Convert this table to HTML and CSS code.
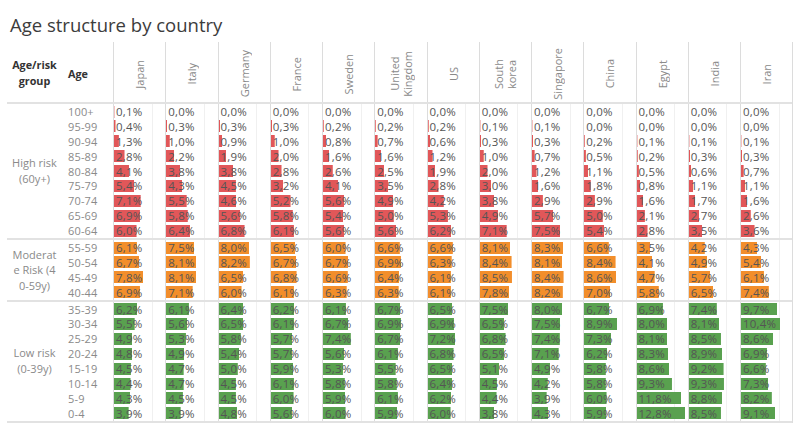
FILE: index.html
```
<!DOCTYPE html>
<html lang="en">
<head>
<meta charset="utf-8">
<title>Age structure by country</title>
<link rel="stylesheet" href="styles.css">
</head>
<body>
<div class="title">Age structure by country</div>
<div class="table">
  <div class="head">
    <div class="h-group">Age/risk<br>group</div>
    <div class="h-age">Age</div>
    <div class="h-country"><span>Japan</span></div>
    <div class="h-country"><span>Italy</span></div>
    <div class="h-country"><span>Germany</span></div>
    <div class="h-country"><span>France</span></div>
    <div class="h-country"><span>Sweden</span></div>
    <div class="h-country"><span>United<br>Kingdom</span></div>
    <div class="h-country"><span>US</span></div>
    <div class="h-country"><span>South<br>korea</span></div>
    <div class="h-country"><span>Singapore</span></div>
    <div class="h-country"><span>China</span></div>
    <div class="h-country"><span>Egypt</span></div>
    <div class="h-country"><span>India</span></div>
    <div class="h-country"><span>Iran</span></div>
  </div>

  <div class="section high">
    <div class="group span9">High risk<br>(60y+)</div>
    <div class="age">100+</div><div class="c" style="--v:0.1">0,1%</div><div class="c" style="--v:0">0,0%</div><div class="c" style="--v:0">0,0%</div><div class="c" style="--v:0">0,0%</div><div class="c" style="--v:0">0,0%</div><div class="c" style="--v:0">0,0%</div><div class="c" style="--v:0">0,0%</div><div class="c" style="--v:0">0,0%</div><div class="c" style="--v:0">0,0%</div><div class="c" style="--v:0">0,0%</div><div class="c" style="--v:0">0,0%</div><div class="c" style="--v:0">0,0%</div><div class="c" style="--v:0">0,0%</div>
    <div class="age">95-99</div><div class="c" style="--v:0.4">0,4%</div><div class="c" style="--v:0.3">0,3%</div><div class="c" style="--v:0.3">0,3%</div><div class="c" style="--v:0.3">0,3%</div><div class="c" style="--v:0.2">0,2%</div><div class="c" style="--v:0.2">0,2%</div><div class="c" style="--v:0.2">0,2%</div><div class="c" style="--v:0.1">0,1%</div><div class="c" style="--v:0.1">0,1%</div><div class="c" style="--v:0">0,0%</div><div class="c" style="--v:0">0,0%</div><div class="c" style="--v:0">0,0%</div><div class="c" style="--v:0">0,0%</div>
    <div class="age">90-94</div><div class="c" style="--v:1.3">1,3%</div><div class="c" style="--v:1.0">1,0%</div><div class="c" style="--v:0.9">0,9%</div><div class="c" style="--v:1.0">1,0%</div><div class="c" style="--v:0.8">0,8%</div><div class="c" style="--v:0.7">0,7%</div><div class="c" style="--v:0.6">0,6%</div><div class="c" style="--v:0.3">0,3%</div><div class="c" style="--v:0.3">0,3%</div><div class="c" style="--v:0.2">0,2%</div><div class="c" style="--v:0.1">0,1%</div><div class="c" style="--v:0.1">0,1%</div><div class="c" style="--v:0.1">0,1%</div>
    <div class="age">85-89</div><div class="c" style="--v:2.8">2,8%</div><div class="c" style="--v:2.2">2,2%</div><div class="c" style="--v:1.9">1,9%</div><div class="c" style="--v:2.0">2,0%</div><div class="c" style="--v:1.6">1,6%</div><div class="c" style="--v:1.6">1,6%</div><div class="c" style="--v:1.2">1,2%</div><div class="c" style="--v:1.0">1,0%</div><div class="c" style="--v:0.7">0,7%</div><div class="c" style="--v:0.5">0,5%</div><div class="c" style="--v:0.2">0,2%</div><div class="c" style="--v:0.3">0,3%</div><div class="c" style="--v:0.3">0,3%</div>
    <div class="age">80-84</div><div class="c" style="--v:4.1">4,1%</div><div class="c" style="--v:3.8">3,8%</div><div class="c" style="--v:3.8">3,8%</div><div class="c" style="--v:2.8">2,8%</div><div class="c" style="--v:2.6">2,6%</div><div class="c" style="--v:2.5">2,5%</div><div class="c" style="--v:1.9">1,9%</div><div class="c" style="--v:2.0">2,0%</div><div class="c" style="--v:1.2">1,2%</div><div class="c" style="--v:1.1">1,1%</div><div class="c" style="--v:0.5">0,5%</div><div class="c" style="--v:0.6">0,6%</div><div class="c" style="--v:0.7">0,7%</div>
    <div class="age">75-79</div><div class="c" style="--v:5.4">5,4%</div><div class="c" style="--v:4.3">4,3%</div><div class="c" style="--v:4.5">4,5%</div><div class="c" style="--v:3.2">3,2%</div><div class="c" style="--v:4.1">4,1%</div><div class="c" style="--v:3.5">3,5%</div><div class="c" style="--v:2.8">2,8%</div><div class="c" style="--v:3.0">3,0%</div><div class="c" style="--v:1.6">1,6%</div><div class="c" style="--v:1.8">1,8%</div><div class="c" style="--v:0.8">0,8%</div><div class="c" style="--v:1.1">1,1%</div><div class="c" style="--v:1.1">1,1%</div>
    <div class="age">70-74</div><div class="c" style="--v:7.1">7,1%</div><div class="c" style="--v:5.5">5,5%</div><div class="c" style="--v:4.6">4,6%</div><div class="c" style="--v:5.2">5,2%</div><div class="c" style="--v:5.6">5,6%</div><div class="c" style="--v:4.9">4,9%</div><div class="c" style="--v:4.2">4,2%</div><div class="c" style="--v:3.8">3,8%</div><div class="c" style="--v:2.9">2,9%</div><div class="c" style="--v:2.9">2,9%</div><div class="c" style="--v:1.6">1,6%</div><div class="c" style="--v:1.7">1,7%</div><div class="c" style="--v:1.6">1,6%</div>
    <div class="age">65-69</div><div class="c" style="--v:6.9">6,9%</div><div class="c" style="--v:5.8">5,8%</div><div class="c" style="--v:5.6">5,6%</div><div class="c" style="--v:5.8">5,8%</div><div class="c" style="--v:5.4">5,4%</div><div class="c" style="--v:5.0">5,0%</div><div class="c" style="--v:5.3">5,3%</div><div class="c" style="--v:4.9">4,9%</div><div class="c" style="--v:5.7">5,7%</div><div class="c" style="--v:5.0">5,0%</div><div class="c" style="--v:2.1">2,1%</div><div class="c" style="--v:2.7">2,7%</div><div class="c" style="--v:2.6">2,6%</div>
    <div class="age">60-64</div><div class="c" style="--v:6.0">6,0%</div><div class="c" style="--v:6.4">6,4%</div><div class="c" style="--v:6.8">6,8%</div><div class="c" style="--v:6.1">6,1%</div><div class="c" style="--v:5.6">5,6%</div><div class="c" style="--v:5.6">5,6%</div><div class="c" style="--v:6.2">6,2%</div><div class="c" style="--v:7.1">7,1%</div><div class="c" style="--v:7.5">7,5%</div><div class="c" style="--v:5.4">5,4%</div><div class="c" style="--v:2.8">2,8%</div><div class="c" style="--v:3.5">3,5%</div><div class="c" style="--v:3.6">3,6%</div>
  </div>

  <div class="section mod">
    <div class="group span4">Moderat<br>e Risk (4<br>0-59y)</div>
    <div class="age">55-59</div><div class="c" style="--v:6.1">6,1%</div><div class="c" style="--v:7.5">7,5%</div><div class="c" style="--v:8.0">8,0%</div><div class="c" style="--v:6.5">6,5%</div><div class="c" style="--v:6.0">6,0%</div><div class="c" style="--v:6.6">6,6%</div><div class="c" style="--v:6.6">6,6%</div><div class="c" style="--v:8.1">8,1%</div><div class="c" style="--v:8.3">8,3%</div><div class="c" style="--v:6.6">6,6%</div><div class="c" style="--v:3.5">3,5%</div><div class="c" style="--v:4.2">4,2%</div><div class="c" style="--v:4.3">4,3%</div>
    <div class="age">50-54</div><div class="c" style="--v:6.7">6,7%</div><div class="c" style="--v:8.1">8,1%</div><div class="c" style="--v:8.2">8,2%</div><div class="c" style="--v:6.7">6,7%</div><div class="c" style="--v:6.7">6,7%</div><div class="c" style="--v:6.9">6,9%</div><div class="c" style="--v:6.3">6,3%</div><div class="c" style="--v:8.4">8,4%</div><div class="c" style="--v:8.1">8,1%</div><div class="c" style="--v:8.4">8,4%</div><div class="c" style="--v:4.1">4,1%</div><div class="c" style="--v:4.9">4,9%</div><div class="c" style="--v:5.4">5,4%</div>
    <div class="age">45-49</div><div class="c" style="--v:7.8">7,8%</div><div class="c" style="--v:8.1">8,1%</div><div class="c" style="--v:6.5">6,5%</div><div class="c" style="--v:6.8">6,8%</div><div class="c" style="--v:6.6">6,6%</div><div class="c" style="--v:6.4">6,4%</div><div class="c" style="--v:6.1">6,1%</div><div class="c" style="--v:8.5">8,5%</div><div class="c" style="--v:8.4">8,4%</div><div class="c" style="--v:8.6">8,6%</div><div class="c" style="--v:4.7">4,7%</div><div class="c" style="--v:5.7">5,7%</div><div class="c" style="--v:6.1">6,1%</div>
    <div class="age">40-44</div><div class="c" style="--v:6.9">6,9%</div><div class="c" style="--v:7.1">7,1%</div><div class="c" style="--v:6.0">6,0%</div><div class="c" style="--v:6.1">6,1%</div><div class="c" style="--v:6.3">6,3%</div><div class="c" style="--v:6.3">6,3%</div><div class="c" style="--v:6.1">6,1%</div><div class="c" style="--v:7.8">7,8%</div><div class="c" style="--v:8.2">8,2%</div><div class="c" style="--v:7.0">7,0%</div><div class="c" style="--v:5.8">5,8%</div><div class="c" style="--v:6.5">6,5%</div><div class="c" style="--v:7.4">7,4%</div>
  </div>

  <div class="section low">
    <div class="group span8">Low risk<br>(0-39y)</div>
    <div class="age">35-39</div><div class="c" style="--v:6.2">6,2%</div><div class="c" style="--v:6.1">6,1%</div><div class="c" style="--v:6.4">6,4%</div><div class="c" style="--v:6.2">6,2%</div><div class="c" style="--v:6.1">6,1%</div><div class="c" style="--v:6.7">6,7%</div><div class="c" style="--v:6.5">6,5%</div><div class="c" style="--v:7.5">7,5%</div><div class="c" style="--v:8.0">8,0%</div><div class="c" style="--v:6.7">6,7%</div><div class="c" style="--v:6.9">6,9%</div><div class="c" style="--v:7.4">7,4%</div><div class="c" style="--v:9.7">9,7%</div>
    <div class="age">30-34</div><div class="c" style="--v:5.5">5,5%</div><div class="c" style="--v:5.6">5,6%</div><div class="c" style="--v:6.5">6,5%</div><div class="c" style="--v:6.1">6,1%</div><div class="c" style="--v:6.7">6,7%</div><div class="c" style="--v:6.9">6,9%</div><div class="c" style="--v:6.9">6,9%</div><div class="c" style="--v:6.5">6,5%</div><div class="c" style="--v:7.5">7,5%</div><div class="c" style="--v:8.9">8,9%</div><div class="c" style="--v:8.0">8,0%</div><div class="c" style="--v:8.1">8,1%</div><div class="c" style="--v:10.4">10,4%</div>
    <div class="age">25-29</div><div class="c" style="--v:4.9">4,9%</div><div class="c" style="--v:5.3">5,3%</div><div class="c" style="--v:5.8">5,8%</div><div class="c" style="--v:5.7">5,7%</div><div class="c" style="--v:7.4">7,4%</div><div class="c" style="--v:6.7">6,7%</div><div class="c" style="--v:7.2">7,2%</div><div class="c" style="--v:6.8">6,8%</div><div class="c" style="--v:7.4">7,4%</div><div class="c" style="--v:7.3">7,3%</div><div class="c" style="--v:8.1">8,1%</div><div class="c" style="--v:8.5">8,5%</div><div class="c" style="--v:8.6">8,6%</div>
    <div class="age">20-24</div><div class="c" style="--v:4.8">4,8%</div><div class="c" style="--v:4.9">4,9%</div><div class="c" style="--v:5.4">5,4%</div><div class="c" style="--v:5.7">5,7%</div><div class="c" style="--v:5.6">5,6%</div><div class="c" style="--v:6.1">6,1%</div><div class="c" style="--v:6.8">6,8%</div><div class="c" style="--v:6.5">6,5%</div><div class="c" style="--v:7.1">7,1%</div><div class="c" style="--v:6.2">6,2%</div><div class="c" style="--v:8.3">8,3%</div><div class="c" style="--v:8.9">8,9%</div><div class="c" style="--v:6.9">6,9%</div>
    <div class="age">15-19</div><div class="c" style="--v:4.5">4,5%</div><div class="c" style="--v:4.7">4,7%</div><div class="c" style="--v:5.0">5,0%</div><div class="c" style="--v:5.9">5,9%</div><div class="c" style="--v:5.3">5,3%</div><div class="c" style="--v:5.5">5,5%</div><div class="c" style="--v:6.5">6,5%</div><div class="c" style="--v:5.1">5,1%</div><div class="c" style="--v:4.9">4,9%</div><div class="c" style="--v:5.8">5,8%</div><div class="c" style="--v:8.6">8,6%</div><div class="c" style="--v:9.2">9,2%</div><div class="c" style="--v:6.6">6,6%</div>
    <div class="age">10-14</div><div class="c" style="--v:4.4">4,4%</div><div class="c" style="--v:4.7">4,7%</div><div class="c" style="--v:4.5">4,5%</div><div class="c" style="--v:6.1">6,1%</div><div class="c" style="--v:5.8">5,8%</div><div class="c" style="--v:5.8">5,8%</div><div class="c" style="--v:6.4">6,4%</div><div class="c" style="--v:4.5">4,5%</div><div class="c" style="--v:4.2">4,2%</div><div class="c" style="--v:5.8">5,8%</div><div class="c" style="--v:9.3">9,3%</div><div class="c" style="--v:9.3">9,3%</div><div class="c" style="--v:7.3">7,3%</div>
    <div class="age">5-9</div><div class="c" style="--v:4.3">4,3%</div><div class="c" style="--v:4.5">4,5%</div><div class="c" style="--v:4.5">4,5%</div><div class="c" style="--v:6.0">6,0%</div><div class="c" style="--v:5.9">5,9%</div><div class="c" style="--v:6.1">6,1%</div><div class="c" style="--v:6.2">6,2%</div><div class="c" style="--v:4.4">4,4%</div><div class="c" style="--v:3.9">3,9%</div><div class="c" style="--v:6.0">6,0%</div><div class="c" style="--v:11.8">11,8%</div><div class="c" style="--v:8.8">8,8%</div><div class="c" style="--v:8.2">8,2%</div>
    <div class="age">0-4</div><div class="c" style="--v:3.9">3,9%</div><div class="c" style="--v:3.9">3,9%</div><div class="c" style="--v:4.8">4,8%</div><div class="c" style="--v:5.6">5,6%</div><div class="c" style="--v:6.0">6,0%</div><div class="c" style="--v:5.9">5,9%</div><div class="c" style="--v:6.0">6,0%</div><div class="c" style="--v:3.8">3,8%</div><div class="c" style="--v:4.3">4,3%</div><div class="c" style="--v:5.9">5,9%</div><div class="c" style="--v:12.8">12,8%</div><div class="c" style="--v:8.5">8,5%</div><div class="c" style="--v:9.1">9,1%</div>
  </div>
</div>
</body>
</html>
```

FILE: styles.css
```
* {
  box-sizing: border-box;
}

body {
  margin: 0;
  background: #ffffff;
  font-family: "Open Sans", "Liberation Sans", sans-serif;
  color: #555555;
}

.title {
  height: 42px;
  padding: 13px 0 0 10px;
  font-size: 18.5px;
  line-height: 24px;
  color: #3c3c3c;
}

.table {
  margin-left: 7px;
  width: 786px;
  border-right: 1px solid #dcdcdc;
}

.head,
.section {
  display: grid;
  grid-template-columns: 55px 51px repeat(13, 52.25px);
  border-bottom: 2px solid #e2e2e2;
}

.head {
  height: 62px;
}

.h-group {
  display: flex;
  align-items: center;
  justify-content: center;
  text-align: center;
  font-size: 10.8px;
  font-weight: 700;
  line-height: 16px;
  color: #333333;
  padding-top: 2px;
}

.h-age {
  display: flex;
  align-items: center;
  padding: 2px 0 0 6px;
  font-size: 10.8px;
  font-weight: 700;
  color: #333333;
}

.h-country {
  display: flex;
  align-items: center;
  justify-content: center;
  border-left: 1px solid #dcdcdc;
  font-size: 11px;
  line-height: 13px;
  color: #8a8a8a;
  padding-top: 4px;
}

.h-country span {
  writing-mode: vertical-rl;
  transform: rotate(180deg);
  text-align: center;
  white-space: nowrap;
}

.section {
  grid-auto-rows: 14.9px;
}

.high { --bar: #e15759; }
.mod { --bar: #f28e2b; }
.low { --bar: #59a14f; }

.group {
  grid-column: 1;
  display: flex;
  align-items: center;
  justify-content: center;
  text-align: center;
  font-size: 11px;
  line-height: 16px;
  color: #8a8a8a;
  white-space: nowrap;
}

.mod .group {
  line-height: 15.5px;
}

.span9 { grid-row: 1 / span 9; }
.span8 { grid-row: 1 / span 8; }
.span4 { grid-row: 1 / span 4; }

.age {
  padding: 1px 0 0 6px;
  font-size: 11px;
  letter-spacing: 0.15px;
  line-height: 14px;
  color: #8a8a8a;
  white-space: nowrap;
}

.c {
  border-left: 1px solid #dcdcdc;
  padding: 1px 0 0 2px;
  font-size: 11.5px;
  letter-spacing: 0.2px;
  line-height: 14px;
  color: #555555;
  white-space: nowrap;
  background:
    linear-gradient(var(--bar), var(--bar)) 0 1.5px / calc(var(--v) * 3.76px) 12px no-repeat,
    linear-gradient(#f0f0f0, #f0f0f0) 37.6px 0 / 1px 100% no-repeat;
}
```
